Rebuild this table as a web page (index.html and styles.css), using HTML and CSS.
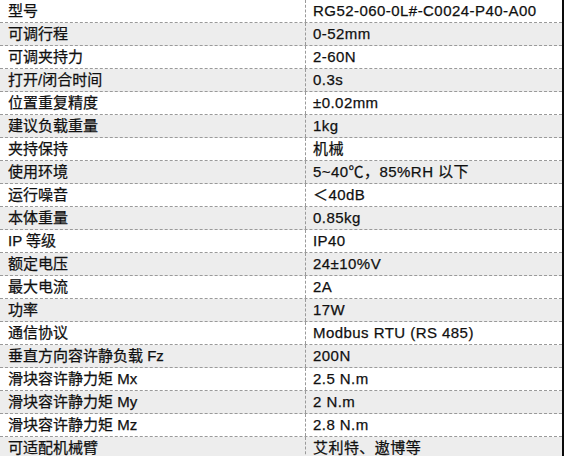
FILE: index.html
```html
<!DOCTYPE html>
<html lang="zh-CN">
<head>
<meta charset="utf-8">
<link rel="stylesheet" href="styles.css">
</head>
<body>
<div class="sheet">
  <div class="spec">
    <div class="row"><div class="k">型号</div><div class="v">RG52-060-0L#-C0024-P40-A00</div></div>
    <div class="row alt"><div class="k">可调行程</div><div class="v">0-52mm</div></div>
    <div class="row"><div class="k">可调夹持力</div><div class="v">2-60N</div></div>
    <div class="row alt"><div class="k">打开/闭合时间</div><div class="v">0.3s</div></div>
    <div class="row"><div class="k">位置重复精度</div><div class="v">±0.02mm</div></div>
    <div class="row alt"><div class="k">建议负载重量</div><div class="v">1kg</div></div>
    <div class="row"><div class="k">夹持保持</div><div class="v">机械</div></div>
    <div class="row alt"><div class="k">使用环境</div><div class="v">5~40℃，85%RH 以下</div></div>
    <div class="row"><div class="k">运行噪音</div><div class="v">＜40dB</div></div>
    <div class="row alt"><div class="k">本体重量</div><div class="v">0.85kg</div></div>
    <div class="row"><div class="k">IP 等级</div><div class="v">IP40</div></div>
    <div class="row alt"><div class="k">额定电压</div><div class="v">24±10%V</div></div>
    <div class="row"><div class="k">最大电流</div><div class="v">2A</div></div>
    <div class="row alt"><div class="k">功率</div><div class="v">17W</div></div>
    <div class="row"><div class="k">通信协议</div><div class="v">Modbus RTU (RS 485)</div></div>
    <div class="row alt"><div class="k">垂直方向容许静负载 Fz</div><div class="v">200N</div></div>
    <div class="row"><div class="k">滑块容许静力矩 Mx</div><div class="v">2.5 N.m</div></div>
    <div class="row alt"><div class="k">滑块容许静力矩 My</div><div class="v">2 N.m</div></div>
    <div class="row"><div class="k">滑块容许静力矩 Mz</div><div class="v">2.8 N.m</div></div>
    <div class="row alt"><div class="k">可适配机械臂</div><div class="v">艾利特、遨博等</div></div>
  </div>
  <div class="edge"></div>
</div>
</body>
</html>
```
FILE: styles.css
```css
html, body {
  margin: 0;
  padding: 0;
  background: #ffffff;
}
body {
  width: 564px;
  height: 456px;
  overflow: hidden;
  font-family: "Liberation Sans", "Noto Sans CJK SC", sans-serif;
  font-size: 15px;
  color: #101010;
  -webkit-text-stroke: 0.25px #101010;
}
.sheet {
  display: flex;
  width: 564px;
  height: 456px;
}
.spec {
  width: 562px;
  display: flex;
  flex-direction: column;
}
.edge {
  width: 2px;
  background: #0a0a0a;
}
.row {
  display: grid;
  grid-template-columns: 305px 1fr;
  height: 22px;
  border-bottom: 1px dashed #9a9a9a;
  background: #ffffff;
  flex: none;
}
.row.alt {
  background: #ededed;
}
.k, .v {
  display: flex;
  align-items: center;
  line-height: 22px;
  white-space: nowrap;
}
.k {
  padding-left: 8px;
}
.v {
  padding-left: 7px;
  letter-spacing: 0.45px;
  border-left: 1px dashed #9a9a9a;
}
```
